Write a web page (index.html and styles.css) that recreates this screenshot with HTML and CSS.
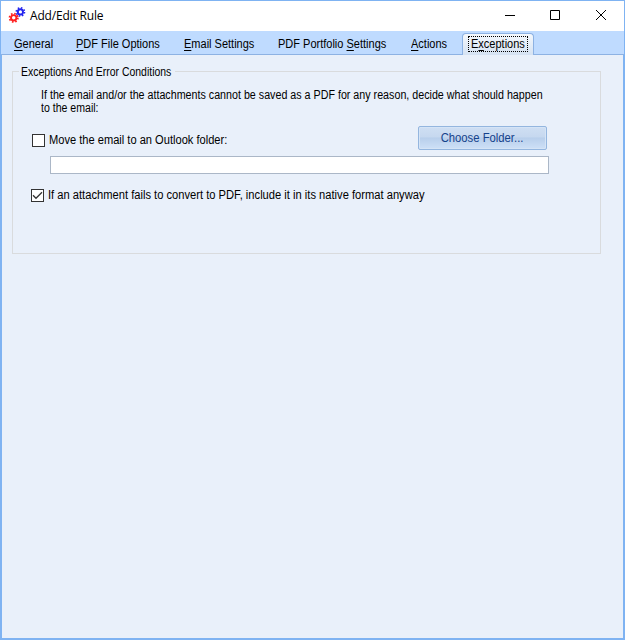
FILE: index.html
```
<!DOCTYPE html>
<html lang="en">
<head>
<meta charset="utf-8">
<title>Add/Edit Rule</title>
<link rel="stylesheet" href="styles.css">
</head>
<body>
<div class="window">
  <header class="titlebar">
    <svg class="app-icon" width="18" height="18" viewBox="0 0 18 18" fill="none">
      <g stroke="#ff2020"><circle cx="5.7" cy="11.8" r="2.7" stroke-width="1.9"/><circle cx="5.7" cy="11.8" r="4.2" stroke-width="1.7" stroke-dasharray="1.6 1.7"/></g>
      <g stroke="#2424ee"><circle cx="12.4" cy="5.9" r="2.6" stroke-width="1.9"/><circle cx="12.4" cy="5.9" r="4.1" stroke-width="1.6" stroke-dasharray="1.52 1.7"/></g>
    </svg>
    <h1 class="title">Add/Edit Rule</h1>
    <svg class="controls" width="104" height="12" viewBox="0 0 104 12" fill="none" stroke="#000">
      <path d="M0 5.5h10M45.5 .5h9v9h-9zM91 0l10 10M101 0L91 10"/>
    </svg>
  </header>
  <nav class="tabs">
    <a class="tab general"><span class="text"><u>G</u>eneral</span></a>
    <a class="tab pdf"><span class="text"><u>P</u>DF File Options</span></a>
    <a class="tab email"><span class="text"><u>E</u>mail Settings</span></a>
    <a class="tab portfolio"><span class="text">PDF Portfolio <u>S</u>ettings</span></a>
    <a class="tab actions"><span class="text"><u>A</u>ctions</span></a>
    <a class="tab active"><span class="focus"><span class="text">E<u>x</u>ceptions</span></span></a>
  </nav>
  <main class="page">
    <fieldset class="group">
      <legend><span class="text">Exceptions And Error Conditions</span></legend>
      <p class="intro"><span class="text line1">If the email and/or the attachments cannot be saved as a PDF for any reason, decide what should happen</span><br><span class="text line2">to the email:</span></p>
      <div class="row">
        <span class="box"></span><span class="text move">Move the email to an Outlook folder:</span>
        <button class="choose"><span class="label">Choose Folder...</span></button>
      </div>
      <input class="path" type="text" aria-label="Folder">
      <div class="row native-row">
        <span class="box"><svg width="11" height="11" viewBox="0 0 11 11" fill="none" stroke="#333" stroke-width="1.3"><path d="M1 5.3l3 3L10 2.3"/></svg></span><span class="text native">If an attachment fails to convert to PDF, include it in its native format anyway</span>
      </div>
    </fieldset>
  </main>
</div>
</body>
</html>
```
FILE: styles.css
```
* { box-sizing: border-box; }
body { margin: 0; font: 12px/13px "Liberation Sans", Arial, sans-serif; color: #000; }
.window { width: 625px; height: 640px; display: flex; flex-direction: column; background: #e9f0fa; border: 1px solid #7fb3f2; }
.titlebar { height: 30px; background: #fff; display: flex; align-items: center; flex: none; }
.app-icon { margin-left: 7px; margin-top: -2px; }
.title { margin: 0 0 0 4px; font: 12px/16px "Open Sans", sans-serif; letter-spacing: -.18px; white-space: nowrap; }
.controls { margin-left: auto; margin-right: 15px; }
.tabs { height: 24px; flex: none; display: flex; background: #bfdbff; border-bottom: 1px solid #8db2e3; padding-left: 13px; white-space: nowrap; }
.tab { padding-top: 7px; flex: none; }
.tab u { text-underline-offset: 2px; text-decoration-thickness: 1px; text-decoration-skip-ink: none; }
/* condensed labels, anchored on their left edge */
.text { display: inline-block; transform: scaleX(.917); transform-origin: 0 0; white-space: nowrap; }
.general { width: 62px; }
.pdf { width: 108px; }
.email { width: 94px; }
.portfolio { width: 133px; }
.actions { width: 51px; }
.active { width: 72px; height: 22px; margin-top: 2px; padding: 2px 0 0 5px; border: 1px solid #8db2e3; border-bottom: 0; border-radius: 4px 4px 0 0; background: linear-gradient(#f4f8fd, #d5e2f2); }
.focus { display: block; width: 60px; height: 16px; border: 1px dotted #000; padding: 1px 0 0 2px; }
.page { flex: 1; border: solid #7fb3f2; border-width: 0 1px 1px; padding: 10px 0 0 10px; }
.group { position: relative; margin: 6px 0 0; padding: 0; min-width: 0; width: 589px; height: 183px; border: 1px solid #d9dbdd; }
legend { position: absolute; top: -6px; left: 6px; width: 156px; height: 13px; padding: 0 0 0 2px; background: #e9f0fa; }
legend .text { transform: scaleX(.87); }
.intro { margin: 17px 0 0 28px; }
.line1 { transform: scaleX(.892); }
.line2 { transform: scaleX(.88); }
.row { display: flex; height: 24px; margin: 11px 0 0 19px; align-items: flex-start; white-space: nowrap; }
.box { width: 13px; height: 13px; margin-top: 8px; border: 1px solid #333; background: #fff; flex: none; }
.box svg { display: block; }
.move { margin: 8px 0 0 4px; transform: scaleX(.925); }
.choose { width: 129px; height: 24px; margin: 0 53px 0 auto; padding: 0; border: 1px solid #94b6df; border-radius: 2px; background: linear-gradient(#cfdff3, #c6d8ef 45%, #b8cfeb 50%, #cee0f7); box-shadow: inset 0 0 0 1px #d5e4f6; color: #15428b; font: 12px/20px "Liberation Sans", Arial, sans-serif; }
.label { display: inline-block; transform: scaleX(.94); }
.path { display: block; width: 499px; height: 18px; margin: 6px 0 0 37px; border: 1px solid #abb7c7; background: #fff; padding: 0; }
.native-row { margin: 15px 0 0 18px; }
.native-row .box { margin-top: 0; }
.native { margin-left: 4px; transform: scaleX(.93); }
```
